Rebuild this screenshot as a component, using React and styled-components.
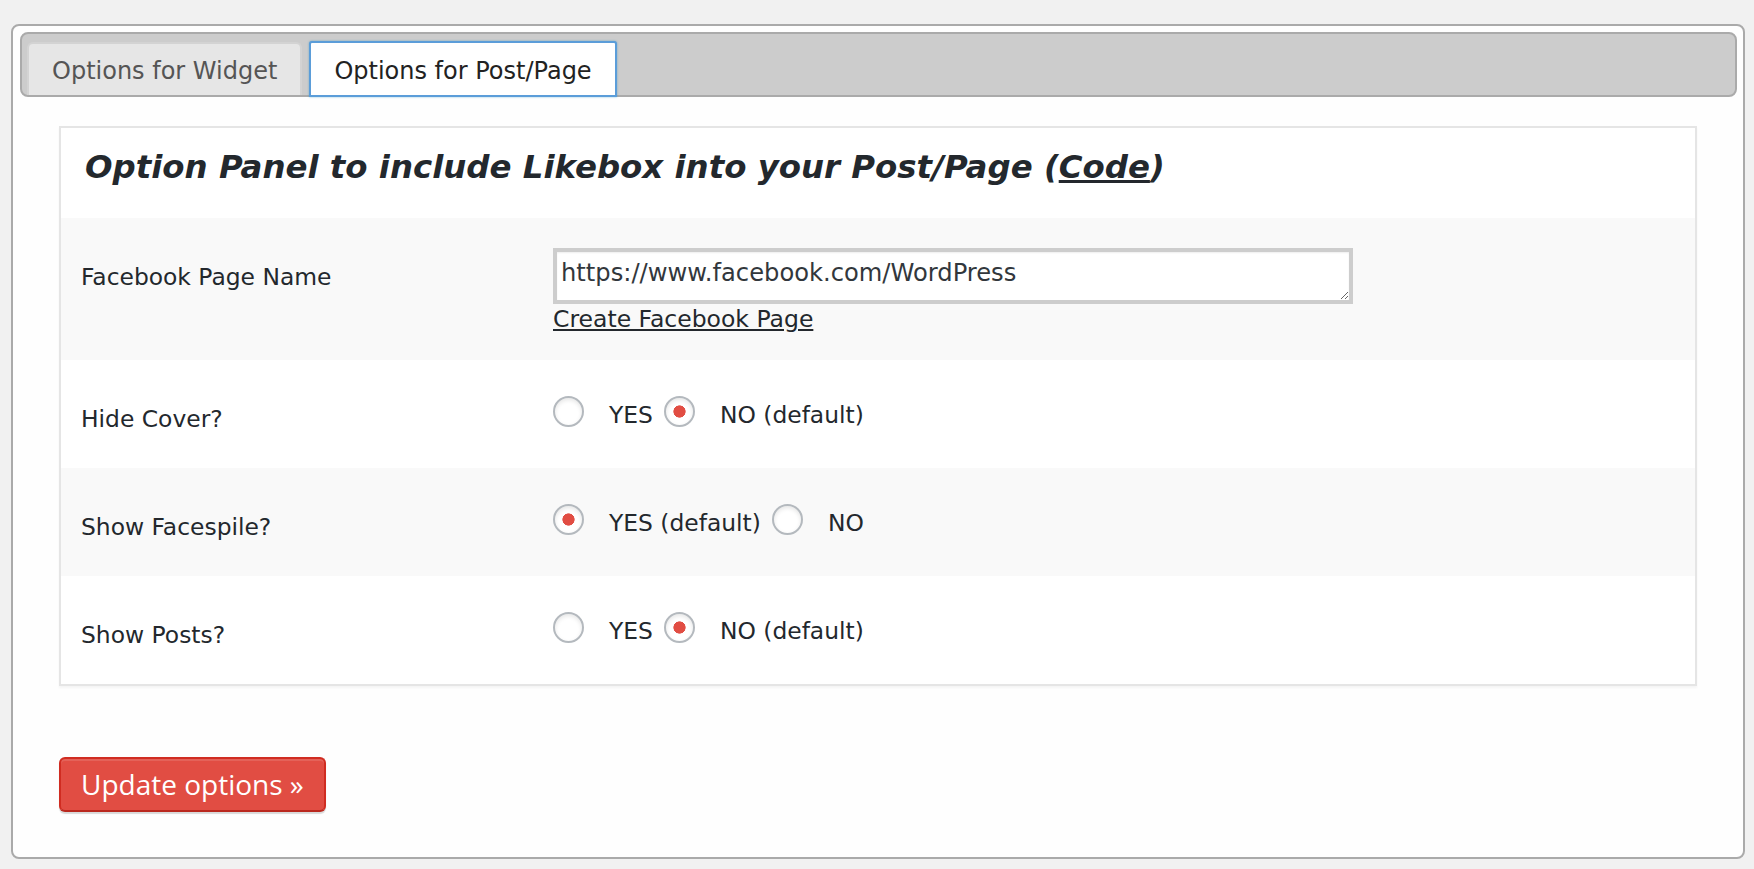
import React from "react";
import styled, { createGlobalStyle } from "styled-components";

const GlobalStyle = createGlobalStyle`
  html, body { margin: 0; }
  body {
    background: #f1f1f1;
    padding: 24px 9px 10px 11px;
    font-family: "DejaVu Sans", Verdana, sans-serif;
    color: #23282d;
  }
  * { box-sizing: border-box; }
`;

const Frame = styled.div`
  border: 2px solid #aaa;
  border-radius: 8px;
  background: #fefefe;
  padding: 6px 6px 45px 7px;
`;

const TabBar = styled.div`
  display: flex;
  align-items: flex-end;
  gap: 7px;
  height: 65px;
  padding: 0 5px;
  background: #ccc;
  border: 2px solid #aaa;
  border-radius: 8px;
`;

const Tab = styled.div`
  font-size: 24px;
  line-height: 30px;
  white-space: nowrap;
  padding: ${(p) => (p.$active ? "13px" : "12px")} 23px 0;
  height: ${(p) => (p.$active ? "56px" : "53px")};
  margin-bottom: ${(p) => (p.$active ? "-2px" : "0")};
  border: 2px solid ${(p) => (p.$active ? "#5b9dd9" : "#d3d3d3")};
  border-bottom: ${(p) => (p.$active ? "2px solid #5b9dd9" : "0")};
  border-radius: ${(p) => (p.$active ? "3px 3px 0 0" : "6px 6px 0 0")};
  background: ${(p) => (p.$active ? "#fff" : "#e6e6e6")};
  color: ${(p) => (p.$active ? "#222" : "#555")};
  box-shadow: ${(p) => (p.$active ? "0 0 2px rgba(30,140,190,.6)" : "none")};
`;

const TabPanel = styled.div`
  padding: 29px 40px 0 39px;
`;

const OptionsPanel = styled.div`
  border: 2px solid #e5e5e5;
  background: #fff;
  box-shadow: 0 2px 2px rgba(0, 0, 0, 0.04);
`;

const PanelTitle = styled.h2`
  margin: 0;
  padding: 18px 24px 30px;
  font-size: 32.4px;
  line-height: 42px;
  font-weight: bold;
  font-style: italic;
  color: #23282d;

  a {
    color: #23282d;
    text-decoration: underline;
  }
`;

const Row = styled.div`
  display: grid;
  grid-template-columns: 492px 1fr;
  background: ${(p) => (p.$shaded ? "#f9f9f9" : "#fff")};
`;

const Label = styled.div`
  padding: 44px 20px 34px;
  font-size: 23.4px;
  line-height: 30px;
  color: #23282d;
`;

const Field = styled.div`
  padding: ${(p) => p.$pad};
`;

const PageInput = styled.textarea`
  display: block;
  width: 800px;
  height: 56px;
  margin: 0;
  padding: 6px 4px;
  border: 4px solid #cdcdcd;
  background: #fff;
  box-shadow: inset 0 1px 2px rgba(0, 0, 0, 0.07);
  font-family: "DejaVu Sans", Verdana, sans-serif;
  font-size: 24.2px;
  line-height: 30px;
  color: #32373c;
  outline: none;
  resize: both;
  overflow: hidden;
`;

const PageLink = styled.a`
  display: block;
  font-size: 23.5px;
  line-height: 30px;
  color: #23282d;
  text-decoration: underline;
`;

const RadioGroup = styled.div`
  display: flex;
  align-items: flex-start;
`;

const RadioOption = styled.label`
  display: flex;
  align-items: flex-start;
`;

const Radio = styled.input`
  appearance: none;
  -webkit-appearance: none;
  flex-shrink: 0;
  width: 31px;
  height: 31px;
  margin: 0 25px 0 0;
  border: 2px solid #b4b9be;
  border-radius: 50%;
  background: #fff;
  box-shadow: inset 0 2px 4px rgba(0, 0, 0, 0.1);

  &:checked {
    background: radial-gradient(circle at center, #e14d43 0 5.8px, #fff 6.4px);
  }
`;

const RadioText = styled.span`
  font-size: 23.4px;
  line-height: 30px;
  margin: 4px 11px 0 0;
  color: #23282d;
  white-space: nowrap;
`;

const ButtonRow = styled.div`
  display: flex;
  margin-top: 71px;
`;

const SubmitButton = styled.button`
  height: 55px;
  padding: 0 20px;
  border: 2px solid #d02c21;
  border-bottom-color: #ba281e;
  border-radius: 6px;
  background: #e14d43;
  color: #fff;
  font-family: "Open Sans", sans-serif;
  font-size: 28px;
  font-weight: 500;
  line-height: 51px;
  box-shadow: inset 0 2px 0 rgba(255, 255, 255, 0.12), 0 2px 1px rgba(0, 0, 0, 0.15);
  cursor: pointer;
`;

const radioRows = [
  { name: "hide_cover", label: "Hide Cover?", yes: "YES", no: "NO (default)", checked: "no" },
  { name: "show_facepile", label: "Show Facespile?", yes: "YES (default)", no: "NO", checked: "yes" },
  { name: "show_posts", label: "Show Posts?", yes: "YES", no: "NO (default)", checked: "no" },
];

export default function App() {
  return (
    <>
      <GlobalStyle />
      <Frame>
        <TabBar>
          <Tab>Options for Widget</Tab>
          <Tab $active>Options for Post/Page</Tab>
        </TabBar>
        <TabPanel>
          <OptionsPanel>
            <PanelTitle>
              Option Panel to include Likebox into your Post/Page (<a href="#code">Code</a>)
            </PanelTitle>
            <Row $shaded>
              <Label>Facebook Page Name</Label>
              <Field $pad="30px 0 26px">
                <PageInput defaultValue="https://www.facebook.com/WordPress" />
                <PageLink href="#create">Create Facebook Page</PageLink>
              </Field>
            </Row>
            {radioRows.map((r, i) => (
              <Row key={r.name} $shaded={i % 2 === 1}>
                <Label>{r.label}</Label>
                <Field $pad="36px 0 0">
                  <RadioGroup>
                    <RadioOption>
                      <Radio type="radio" name={r.name} defaultChecked={r.checked === "yes"} />
                      <RadioText>{r.yes}</RadioText>
                    </RadioOption>
                    <RadioOption>
                      <Radio type="radio" name={r.name} defaultChecked={r.checked === "no"} />
                      <RadioText>{r.no}</RadioText>
                    </RadioOption>
                  </RadioGroup>
                </Field>
              </Row>
            ))}
          </OptionsPanel>
          <ButtonRow>
            <SubmitButton type="button">Update options »</SubmitButton>
          </ButtonRow>
        </TabPanel>
      </Frame>
    </>
  );
}
